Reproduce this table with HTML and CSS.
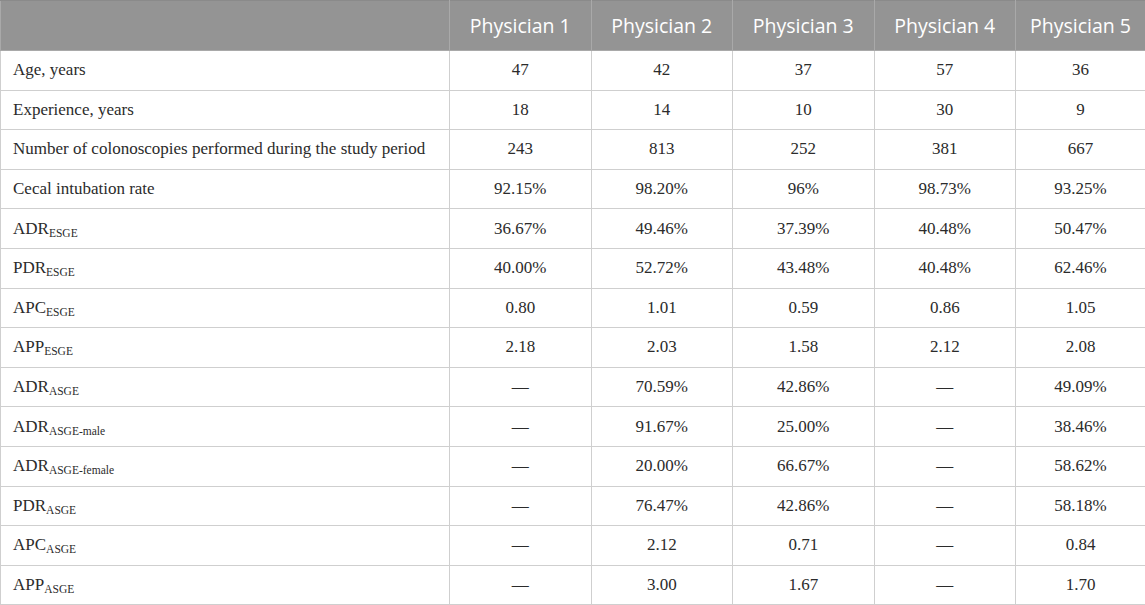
FILE: index.html
```html
<!DOCTYPE html>
<html lang="en">
<head>
    <meta charset="UTF-8">
    <title>Physician colonoscopy metrics</title>
    <link rel="stylesheet" href="styles.css">
</head>
<body>

<table class="data-table">
    <colgroup>
        <col class="col-label">
        <col class="col-doc">
        <col class="col-doc">
        <col class="col-doc">
        <col class="col-doc">
        <col class="col-last">
    </colgroup>
    <thead>
        <tr>
            <th></th>
            <th>Physician 1</th>
            <th>Physician 2</th>
            <th>Physician 3</th>
            <th>Physician 4</th>
            <th>Physician 5</th>
        </tr>
    </thead>
    <tbody>
        <tr><td>Age, years</td><td>47</td><td>42</td><td>37</td><td>57</td><td>36</td></tr>
        <tr><td>Experience, years</td><td>18</td><td>14</td><td>10</td><td>30</td><td>9</td></tr>
        <tr><td>Number of colonoscopies performed during the study period</td><td>243</td><td>813</td><td>252</td><td>381</td><td>667</td></tr>
        <tr><td>Cecal intubation rate</td><td>92.15%</td><td>98.20%</td><td>96%</td><td>98.73%</td><td>93.25%</td></tr>
        <tr><td>ADR<sub>ESGE</sub></td><td>36.67%</td><td>49.46%</td><td>37.39%</td><td>40.48%</td><td>50.47%</td></tr>
        <tr><td>PDR<sub>ESGE</sub></td><td>40.00%</td><td>52.72%</td><td>43.48%</td><td>40.48%</td><td>62.46%</td></tr>
        <tr><td>APC<sub>ESGE</sub></td><td>0.80</td><td>1.01</td><td>0.59</td><td>0.86</td><td>1.05</td></tr>
        <tr><td>APP<sub>ESGE</sub></td><td>2.18</td><td>2.03</td><td>1.58</td><td>2.12</td><td>2.08</td></tr>
        <tr><td>ADR<sub>ASGE</sub></td><td>—</td><td>70.59%</td><td>42.86%</td><td>—</td><td>49.09%</td></tr>
        <tr><td>ADR<sub>ASGE-male</sub></td><td>—</td><td>91.67%</td><td>25.00%</td><td>—</td><td>38.46%</td></tr>
        <tr><td>ADR<sub>ASGE-female</sub></td><td>—</td><td>20.00%</td><td>66.67%</td><td>—</td><td>58.62%</td></tr>
        <tr><td>PDR<sub>ASGE</sub></td><td>—</td><td>76.47%</td><td>42.86%</td><td>—</td><td>58.18%</td></tr>
        <tr><td>APC<sub>ASGE</sub></td><td>—</td><td>2.12</td><td>0.71</td><td>—</td><td>0.84</td></tr>
        <tr><td>APP<sub>ASGE</sub></td><td>—</td><td>3.00</td><td>1.67</td><td>—</td><td>1.70</td></tr>
    </tbody>
</table>

</body>
</html>
```

FILE: styles.css
```css
/* Table of physician metrics */
body {
    margin: 0;
    padding: 0;
    background-color: #ffffff;
}

.data-table {
    width: 1145px;
    border-collapse: collapse;
    table-layout: fixed;
    font-family: "Liberation Serif", "Times New Roman", serif;
    font-size: 17px;
    color: #2b2b2b;
}

.col-label {
    width: 449px;
}

.col-doc {
    width: 141.5px;
}

.col-last {
    width: 130px;
}

.data-table th {
    height: 49px;
    padding: 0 6px;
    background-color: #949494;
    color: #ffffff;
    font-family: "Open Sans", "Noto Sans", sans-serif;
    font-size: 19.5px;
    font-weight: normal;
    text-align: center;
    border: 1px solid #a9a9a9;
    border-top-color: #8a8a8a;
}

.data-table td {
    height: 38.6px;
    padding: 0 8px;
    text-align: center;
    border: 1px solid #cfcfcf;
}

.data-table td:first-child {
    text-align: left;
    padding-left: 12px;
}

.data-table sub {
    font-size: 11.5px;
    vertical-align: -3px;
    line-height: 0;
}
```
